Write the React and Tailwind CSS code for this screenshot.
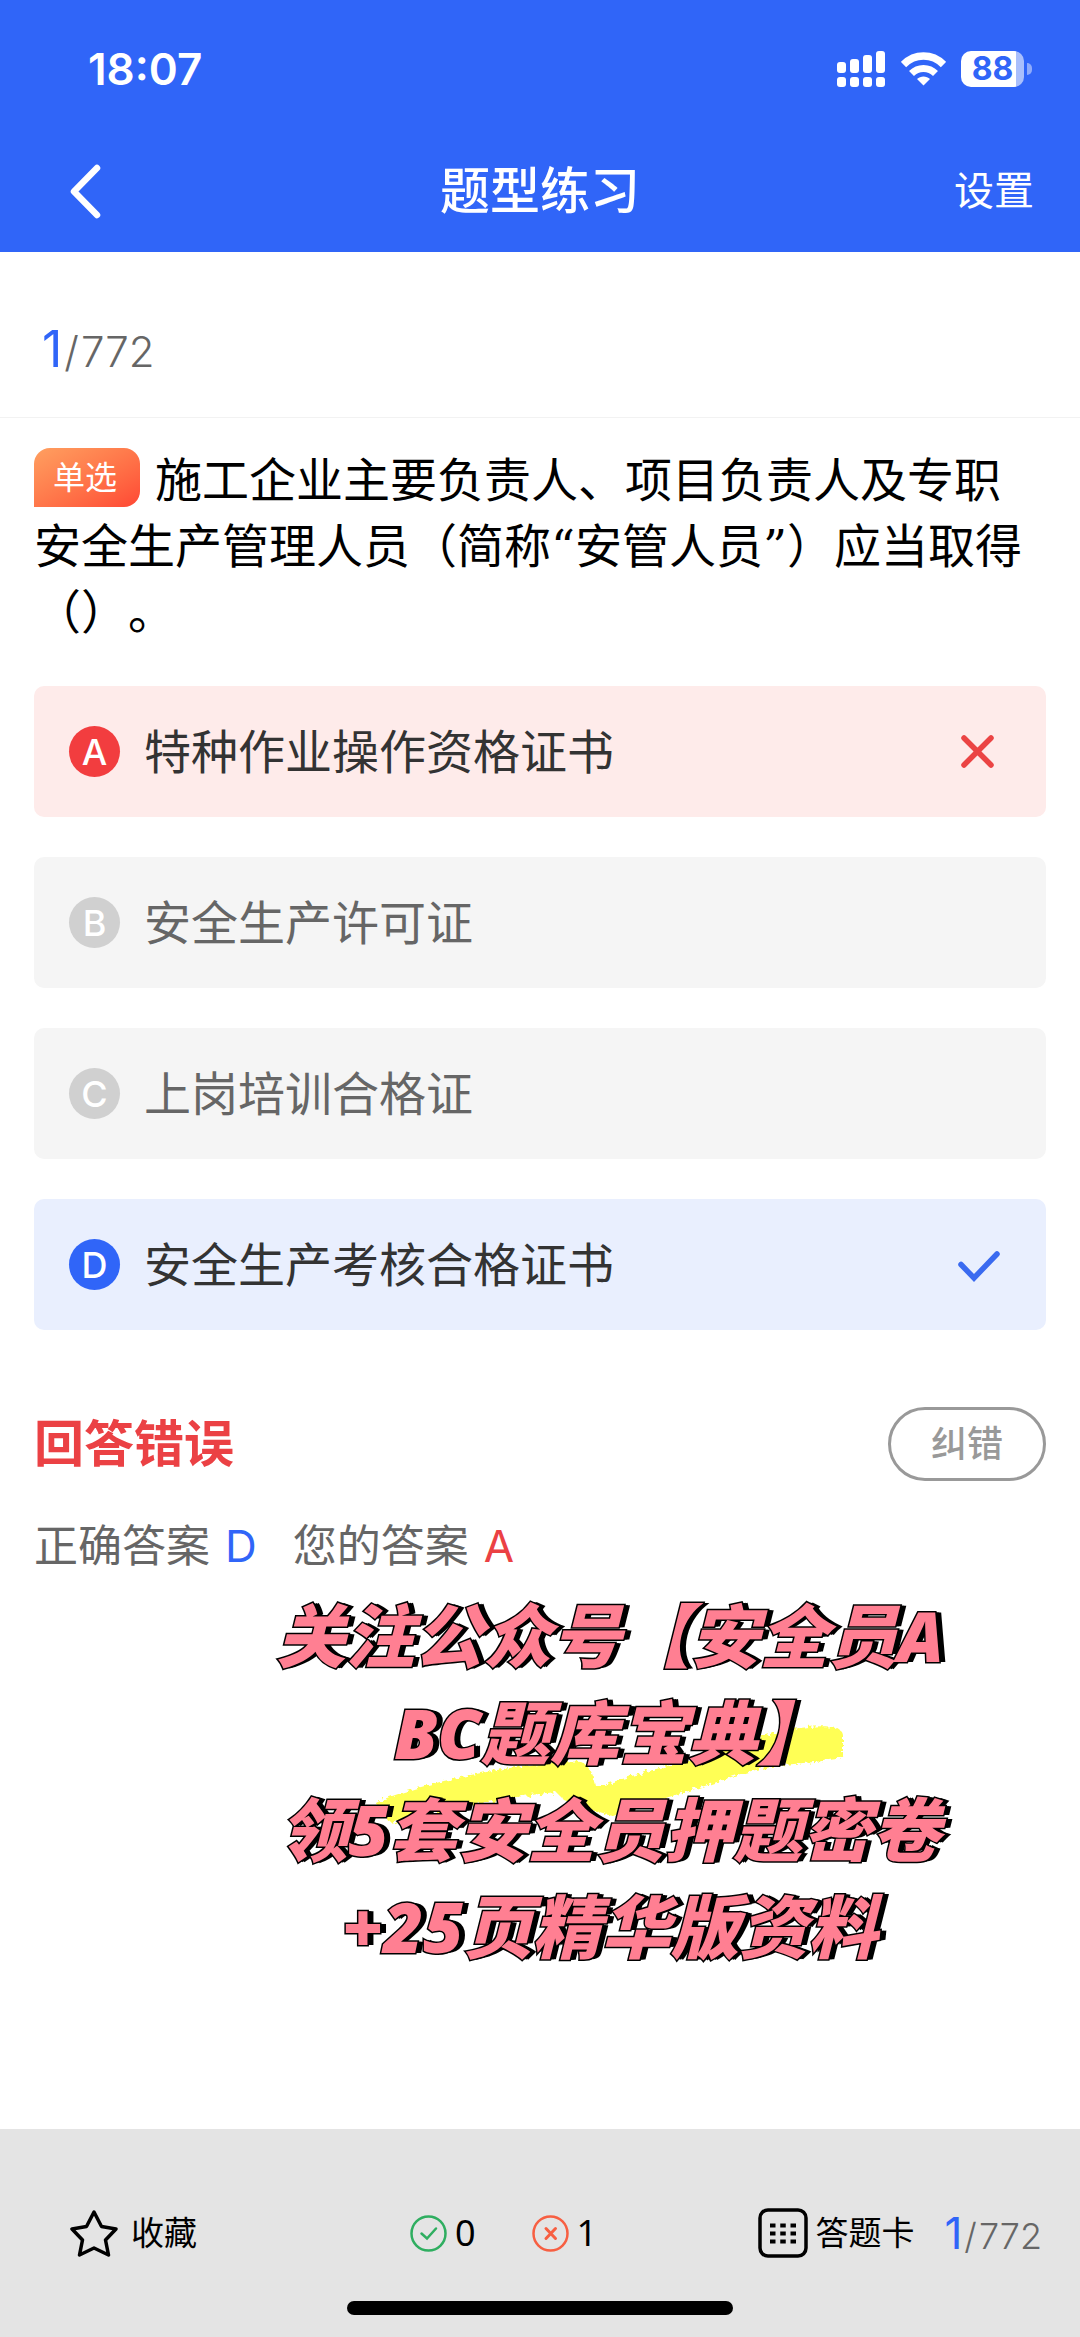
import React from 'react';

const options = [
  { key: 'A', text: '特种作业操作资格证书', state: 'wrong' },
  { key: 'B', text: '安全生产许可证', state: 'idle' },
  { key: 'C', text: '上岗培训合格证', state: 'idle' },
  { key: 'D', text: '安全生产考核合格证书', state: 'right' },
];

const rowStyles = {
  wrong: 'bg-[#feebea] text-[#333333]',
  idle: 'bg-[#f5f5f5] text-[#666666]',
  right: 'bg-[#e9effe] text-[#333333]',
};

const badgeStyles = {
  wrong: 'bg-[#f23d3f]',
  idle: 'bg-[#d0d0d0]',
  right: 'bg-[#3065f8]',
};

const StatusBar = () => (
  <div className="flex h-[126px] items-center justify-between pt-3 pr-[48px] pl-[88px]">
    <span className="text-[44px] leading-none font-semibold">18:07</span>
    <div className="flex items-center gap-[15px]">
      <svg className="h-[36px] w-[49px]" viewBox="0 0 49 36" fill="currentColor" aria-hidden="true">
        <rect x="0" y="11" width="9" height="11" rx="3" />
        <rect x="13" y="8" width="9" height="14" rx="3" />
        <rect x="26" y="4" width="9" height="18" rx="3" />
        <rect x="39" y="0" width="9" height="22" rx="3" />
        <rect x="0" y="26" width="9" height="10" rx="3" />
        <rect x="13" y="26" width="9" height="10" rx="3" />
        <rect x="26" y="26" width="9" height="10" rx="3" />
        <rect x="39" y="26" width="9" height="10" rx="3" />
      </svg>
      <svg className="h-[34px] w-[45px]" viewBox="0 0 45 34" fill="none" stroke="currentColor" aria-hidden="true">
        <path d="M2.5 12.5C8 7 15 4 22.500 4S37 7 42.500 12.500" strokeWidth="7.500" />
        <path d="M10.500 21.500C14 18 18 16.500 22.500 16.500S31 18 34.500 21.500" strokeWidth="7" />
        <path d="M22.500 33.500L16 27C19.500 23.500 25.500 23.500 29 27Z" fill="currentColor" stroke="none" />
      </svg>
      <div className="flex items-center gap-[3px]">
        <div className="flex h-[36px] w-[63px] items-center justify-center rounded-[10px] bg-linear-to-r from-white from-88% to-[#a9bffc] to-88% text-[32px] leading-none font-bold text-[#3065f8]">
          88
        </div>
        <div className="h-[12px] w-[5px] rounded-r-full bg-[#8fabfb]" />
      </div>
    </div>
  </div>
);

const OptionIcon = ({ state }) => {
  if (state === 'wrong') {
    return (
      <svg className="h-[44px] w-[44px]" viewBox="0 0 44 44" fill="none" stroke="#eb4444" strokeWidth="5.500" strokeLinecap="round" aria-hidden="true">
        <path d="M8 8L35 35M35 8L8 35" />
      </svg>
    );
  }
  if (state === 'right') {
    return (
      <svg className="h-[44px] w-[44px]" viewBox="0 0 44 44" fill="none" stroke="#3a6af0" strokeWidth="5.500" strokeLinecap="round" aria-hidden="true">
        <path d="M5 21.500L18 35L41 11" />
      </svg>
    );
  }
  return null;
};

const Option = ({ option }) => (
  <button
    type="button"
    className={`flex h-[131px] w-full items-center rounded-[10px] pr-[46px] pl-[35px] text-left ${rowStyles[option.state]}`}
  >
    <span className={`mr-[24px] flex h-[51px] w-[51px] flex-none items-center justify-center rounded-full text-[36px] leading-none font-medium text-white ${badgeStyles[option.state]}`}>
      {option.key}
    </span>
    <span className="flex-1 text-[47px] leading-[66px]">{option.text}</span>
    <OptionIcon state={option.state} />
  </button>
);

const Promo = () => (
  <div className="relative mt-[8px] pl-[140px]">
    <div className="relative">
      <svg className="absolute top-[132px] left-1/2 h-[110px] w-[484px] -translate-x-1/2" viewBox="0 0 484 110" aria-hidden="true">
        <defs>
          <filter id="brush" x="-5%" y="-10%" width="110%" height="120%">
            <feTurbulence type="fractalNoise" baseFrequency="0.25" numOctaves="2" seed="4" />
            <feDisplacementMap in="SourceGraphic" scale="7" />
          </filter>
        </defs>
        <path
          d="M8 84C35 70 115 50 195 42L213 43C221 46 224 54 227 66L236 66C270 54 320 42 345 34C375 22 405 12 440 8C460 6 474 8 475 16L475 34C474 40 468 41 435 44C405 47 385 50 352 62C320 73 290 80 245 97C220 92 205 84 195 80L188 73L155 77C110 84 60 94 22 104Z"
          fill="#ffff54"
          filter="url(#brush)"
        />
      </svg>
      <p className="relative text-center font-['Open_Sans','Noto_Sans_CJK_SC',sans-serif] text-[69px] leading-[97px] font-black whitespace-nowrap text-[#ff7f92] italic [paint-order:stroke_fill] [-webkit-text-stroke:3px_#000] [text-shadow:2px_0_#000,4px_0_#000,6px_0_#000]">
        关注公众号【安全员A
        <br />
        BC题库宝典】
        <br />
        领5套安全员押题密卷
        <br />
        +25页精华版资料
      </p>
    </div>
  </div>
);

const Footer = () => (
  <footer className="relative mt-auto flex h-[208px] items-center bg-[#e4e4e4] pr-[38px] pl-[70px] text-[33px] leading-none text-black">
    <button type="button" className="flex w-[340px] items-center gap-[13px]">
      <svg className="h-[48px] w-[48px]" viewBox="0 0 48 48" fill="none" stroke="currentColor" strokeWidth="3.500" strokeLinejoin="round" aria-hidden="true">
        <path d="M24 3L31.500 17.500L46 20L35.500 31L38.500 46L24 39L9.500 46L12.500 31L2 20L16.500 17.500Z" />
      </svg>
      收藏
    </button>
    <div className="flex items-center gap-[56px]">
      <span className="flex items-center gap-[8px]">
        <svg className="h-[37px] w-[37px]" viewBox="0 0 37 37" fill="none" stroke="#2fae60" strokeWidth="2.500" strokeLinecap="round" aria-hidden="true">
          <circle cx="18.500" cy="18.500" r="17" />
          <path d="M11.500 18.500L17 23.500L26 13.500" />
        </svg>
        <span className="font-['Noto_Sans',sans-serif] text-[36px]">0</span>
      </span>
      <span className="flex items-center gap-[8px]">
        <svg className="h-[37px] w-[37px]" viewBox="0 0 37 37" fill="none" stroke="#f75f42" strokeWidth="2.500" strokeLinecap="round" aria-hidden="true">
          <circle cx="18.500" cy="18.500" r="17" />
          <path d="M14 13.500L23.500 23.500M23.500 13.500L14 23.500" strokeWidth="3" />
        </svg>
        <span className="font-['Noto_Sans',sans-serif] text-[36px]">1</span>
      </span>
    </div>
    <button type="button" className="ml-auto flex items-center gap-[7px]">
      <svg className="h-[50px] w-[50px]" viewBox="0 0 50 50" fill="none" aria-hidden="true">
        <rect x="2" y="2" width="46" height="46" rx="8" stroke="currentColor" strokeWidth="3.500" />
        <path d="M12 17.500H38M12 25.500H38M12 33.500H38" stroke="currentColor" strokeWidth="4" strokeDasharray="5.500 4.750" />
      </svg>
      答题卡
    </button>
    <p className="ml-[30px] text-[36px] font-light text-[#666666]">
      <span className="text-[44px] font-normal text-[#3065f8]">1</span>
      <span className="mx-[2px]">/</span>772
    </p>
    <div className="absolute bottom-[22px] left-1/2 h-[14px] w-[386px] -translate-x-1/2 rounded-full bg-black" />
  </footer>
);

const App = () => (
  <div className="flex min-h-screen flex-col bg-white font-['Inter','Noto_Sans_CJK_SC',sans-serif]" lang="zh-CN">
    <header className="bg-[#3065f8] text-white">
      <StatusBar />
      <nav className="grid h-[126px] grid-cols-3 items-center px-[46px] pt-1">
        <button type="button" aria-label="返回" className="justify-self-start pl-[22px]">
          <svg className="h-[56px] w-[34px]" viewBox="0 0 34 56" fill="none" stroke="currentColor" strokeWidth="6.500" strokeLinecap="round" strokeLinejoin="round" aria-hidden="true">
            <path d="M29 5L6 28.500L29 52" />
          </svg>
        </button>
        <h1 className="text-center text-[50px] leading-none font-medium">题型练习</h1>
        <button type="button" className="justify-self-end text-[40px] leading-none">设置</button>
      </nav>
    </header>

    <div className="flex h-[166px] items-center border-b border-[#f2f2f2] px-[42px] pt-7">
      <p className="text-[42px] leading-none font-light text-[#666666]">
        <span className="text-[50px] font-normal text-[#3065f8]">1</span>
        <span className="mx-[2px]">/</span>772
      </p>
    </div>

    <main className="px-[34px] pt-[30px] pb-10">
      <h2 className="font-['DejaVu_Serif','Noto_Sans_CJK_SC',sans-serif] text-[47px] leading-[66px] text-black [text-spacing-trim:space-all]">
        <span className="mr-[15px] inline-flex h-[59px] w-[106px] items-center justify-center rounded-2xl rounded-bl-none bg-linear-to-br from-[#ff9f60] to-[#ff4634] pr-1 align-top text-[32px] leading-none text-white">
          单选
        </span>
        施工企业主要负责人、项目负责人及专职安全生产管理人员（简称“安管人员”）应当取得（）。
      </h2>

      <div className="mt-[40px] flex flex-col gap-[40px]">
        {options.map((option) => (
          <Option key={option.key} option={option} />
        ))}
      </div>

      <div className="mt-[77px] flex items-center justify-between">
        <h3 className="text-[50px] leading-none font-bold text-[#eb4144]">回答错误</h3>
        <button type="button" className="h-[74px] w-[158px] rounded-full border-[3px] border-[#999999] text-[36px] leading-none font-medium text-[#999999]">
          纠错
        </button>
      </div>

      <div className="mt-[32px] flex gap-[36px] text-[44px] leading-[66px] text-[#666666]">
        <p className="flex gap-[15px]">正确答案<span className="text-[#3065f8]">D</span></p>
        <p className="flex gap-[15px]">您的答案<span className="text-[#eb4144]">A</span></p>
      </div>

      <Promo />
    </main>

    <Footer />
  </div>
);

export default App;
